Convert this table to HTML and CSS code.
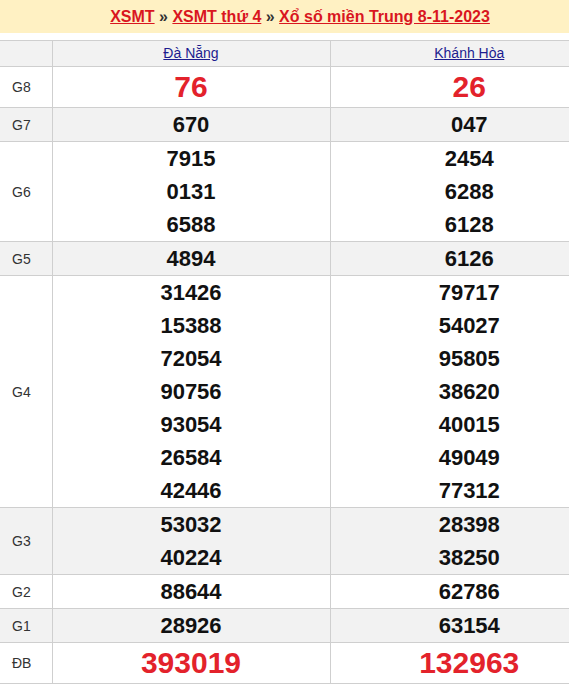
FILE: index.html
```html
<!DOCTYPE html>
<html lang="vi">
<head>
<meta charset="utf-8">
<title>XSMT 8-11-2023</title>
<link rel="stylesheet" href="styles.css">
</head>
<body>
<div class="page">
  <h2 class="title"><a href="#">XSMT</a> » <a href="#">XSMT thứ 4</a> » <a href="#">Xổ số miền Trung 8-11-2023</a></h2>
  <table class="kq">
    <colgroup><col class="c-label"><col class="c-prov"><col class="c-prov"></colgroup>
    <tr class="head alt">
      <th></th>
      <th><a href="#">Đà Nẵng</a></th>
      <th><a href="#">Khánh Hòa</a></th>
    </tr>
    <tr>
      <td class="lbl">G8</td>
      <td><div class="big">76</div></td>
      <td><div class="big">26</div></td>
    </tr>
    <tr class="alt">
      <td class="lbl">G7</td>
      <td><div class="n">670</div></td>
      <td><div class="n">047</div></td>
    </tr>
    <tr>
      <td class="lbl">G6</td>
      <td><div class="n">7915</div><div class="n">0131</div><div class="n">6588</div></td>
      <td><div class="n">2454</div><div class="n">6288</div><div class="n">6128</div></td>
    </tr>
    <tr class="alt">
      <td class="lbl">G5</td>
      <td><div class="n">4894</div></td>
      <td><div class="n">6126</div></td>
    </tr>
    <tr>
      <td class="lbl">G4</td>
      <td><div class="n">31426</div><div class="n">15388</div><div class="n">72054</div><div class="n">90756</div><div class="n">93054</div><div class="n">26584</div><div class="n">42446</div></td>
      <td><div class="n">79717</div><div class="n">54027</div><div class="n">95805</div><div class="n">38620</div><div class="n">40015</div><div class="n">49049</div><div class="n">77312</div></td>
    </tr>
    <tr class="alt">
      <td class="lbl">G3</td>
      <td><div class="n">53032</div><div class="n">40224</div></td>
      <td><div class="n">28398</div><div class="n">38250</div></td>
    </tr>
    <tr>
      <td class="lbl">G2</td>
      <td><div class="n">88644</div></td>
      <td><div class="n">62786</div></td>
    </tr>
    <tr class="alt">
      <td class="lbl">G1</td>
      <td><div class="n">28926</div></td>
      <td><div class="n">63154</div></td>
    </tr>
    <tr>
      <td class="lbl">ĐB</td>
      <td><div class="big">393019</div></td>
      <td><div class="big">132963</div></td>
    </tr>
  </table>
</div>
</body>
</html>
```

FILE: styles.css
```css
html, body {
  margin: 0;
  padding: 0;
  background: #ffffff;
  overflow: hidden;
}

.page {
  width: 608px;
  font-family: "Liberation Sans", Arial, sans-serif;
}

.title {
  margin: 0 0 7px 0;
  height: 33px;
  line-height: 33px;
  font-size: 16px;
  font-weight: bold;
  text-align: center;
  background: #fff1c3;
  color: #333;
  padding-right: 8px;
}

.title a {
  color: #d9161f;
  text-decoration: underline;
}

.kq {
  width: 608px;
  border-collapse: collapse;
  table-layout: fixed;
}

.c-label { width: 52px; }
.c-prov { width: 278px; }

.kq th,
.kq td {
  padding: 0;
  border-top: 1px solid #cfcfcf;
  border-bottom: 1px solid #cfcfcf;
  border-left: 1px solid #cfcfcf;
  text-align: center;
  vertical-align: middle;
}

.kq th:first-child,
.kq td:first-child {
  border-left: none;
}

.kq th {
  height: 25px;
  font-size: 14px;
  font-weight: normal;
  line-height: 25px;
}

.kq th a {
  color: #1c1c8f;
  text-decoration: underline;
}

.alt {
  background: #f2f2f2;
}

.lbl {
  text-align: left !important;
  padding-left: 12px !important;
  font-size: 14px;
  color: #333333;
}

.n {
  font-size: 22px;
  font-weight: bold;
  line-height: 33px;
  color: #111111;
}

.big {
  font-size: 30px;
  font-weight: bold;
  line-height: 40px;
  color: #e3222b;
}
```
